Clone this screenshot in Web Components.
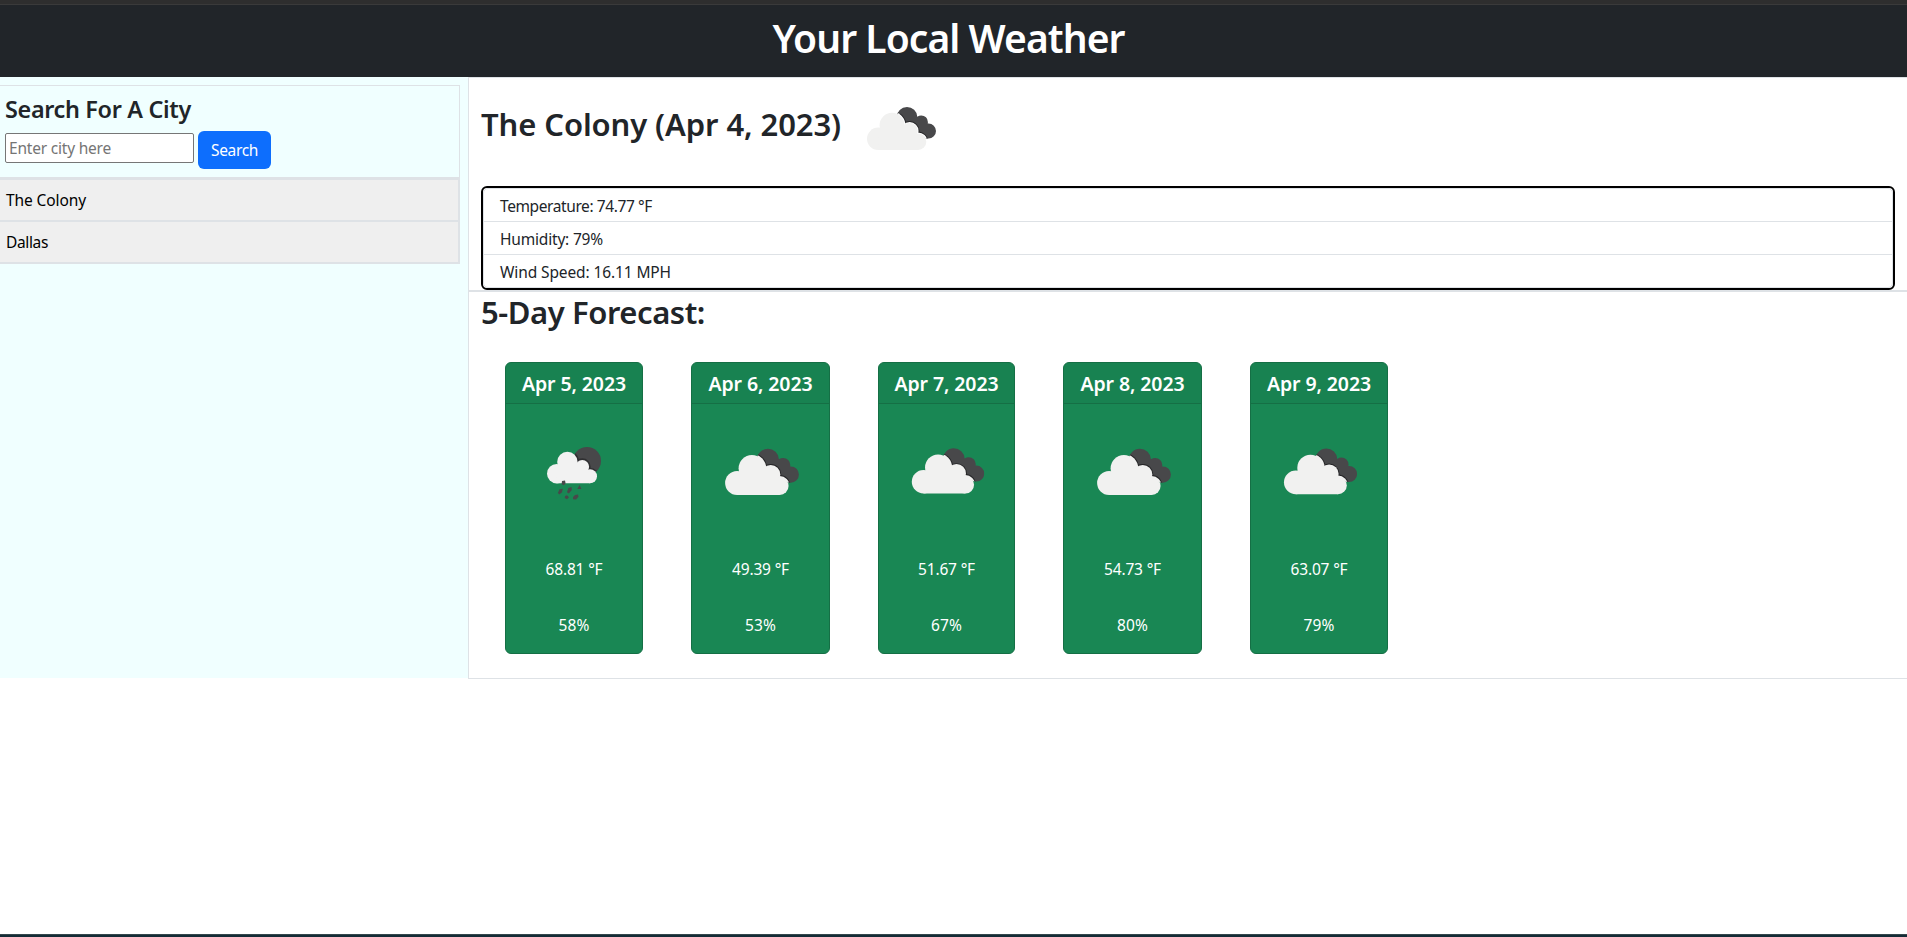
<!DOCTYPE html>
<html lang="en">
<head>
<meta charset="utf-8">
<title>Your Local Weather</title>
<style>
html,body{margin:0;height:100%}
body{font:15.5px/24px "Noto Sans","Open Sans",sans-serif;color:#212529;background:#fff;overflow:hidden}
</style>
</head>
<body>
<weather-app></weather-app>
<script>
const define = (name, html, init) => customElements.define(name, class extends HTMLElement {
  connectedCallback() {
    if (this.shadowRoot) return;
    const t = document.createElement('template');
    t.innerHTML = typeof html === 'function' ? html(this) : html;
    this.attachShadow({mode: 'open'}).append(t.content.cloneNode(true));
    if (init) init(this);
  }
});

// Text tracked to a given width in pixels.
define('fit-text', '<style>:host{display:inline-block;white-space:nowrap}</style><slot></slot>', el => {
  const natural = el.getBoundingClientRect().width;
  const n = el.textContent.length;
  el.style.letterSpacing = ((+el.getAttribute('w') - natural) / n).toFixed(3) + 'px';
});

const blobs = (list, grow = 0) => list.map(([x, y, r]) => `<circle cx="${x}" cy="${y}" r="${r + grow}"/>`).join('');
const cloudIcon = () => {
  const dark = [[67,27.2,10.3],[81.3,32,6.6],[88.4,41,7.6]];
  const light = [[38.2,48.8,11.2],[52,35.2,12.4],[69.6,41,8],[78,51.7,8.3]];
  const body = 'M38 40H52L66 34L78 46V60H38.2Z';
  return `<g transform="translate(-11 10)">
    <clipPath id="c">${blobs(dark)}<path d="M67 28L81 30L90 42L80 46L66 37Z"/></clipPath>
    <g clip-path="url(#c)"><rect x="50" y="10" width="50" height="45" fill="#48484a"/>
    <g fill="#252527">${blobs(light, 1.9)}</g><g class="gap">${blobs(light, 1)}</g></g>
    <g fill="#f1f1f0">${blobs(light)}<path d="${body}"/></g></g>`;
};
const rainIcon = () => {
  const light = [[26.7,43.7,9.7],[37.4,32,10.2],[52.3,36.7,6.8],[60,46.3,7]];
  return `<g transform="scale(.9615) translate(8 10)">
    <clipPath id="c"><circle cx="57" cy="31" r="14"/></clipPath>
    <g clip-path="url(#c)"><rect x="40" y="10" width="40" height="45" fill="#48484a"/>
    <g fill="#303032">${blobs(light, 1.6)}</g></g>
    <g fill="#f2f2f2">${blobs(light)}<path d="M27 36H38L50 33L60 42V53.3H26.7Z"/></g>
    <g fill="#48484a"><path d="M32 51L35 50.5L35.6 53.5L33.8 55.2L31.6 54.2Z"/><path d="M38.4 58L41.5 57L41.8 60L38.8 63.4L37 62.2Z"/>
    <path d="M49.6 55L51.4 59H47.3Z"/><path d="M29.5 59.3L32.8 58.8L32 62.3L29.4 64.6L27.9 63Z"/>
    <path d="M37 65.2L39 67.2L37 69.2L34.7 68L35.2 66Z"/><path d="M45 65L48 64.6L48.5 66.8L46 69.6L43 69.2V67Z"/></g></g>`;
};
define('weather-icon', el => `<style>:host{display:block}svg{display:block;width:100%;height:100%}.gap{fill:var(--gap,#f1f1f0)}</style>
<svg viewBox="0 0 100 100">${el.getAttribute('kind') === 'rain' ? rainIcon() : cloudIcon()}</svg>`);

define('site-header', `<style>
:host{display:block;box-sizing:border-box;height:77px;background:#212529;color:#fff;border-top:4px solid #2e2e2e;text-align:center}
h1{margin:0;border-top:1px solid #3a3a3a;font-size:39px;line-height:66px;font-weight:600;padding-right:10px}
</style><h1><fit-text w="352">Your Local Weather</fit-text></h1>`);

define('city-search', `<style>
:host{display:block;box-sizing:border-box;height:93px;border:1px solid #dee2e6;border-left:0;padding:9px 5px 0}
h4{margin:0 0 7px;font-size:23.4px;line-height:29px;font-weight:560}
form{display:flex;align-items:flex-start;gap:4px}
.field{box-sizing:border-box;width:189px;height:30px;margin-top:2px;border:1px solid #767676;border-radius:2px;background:#fff;color:#757575;padding:0 3px;line-height:28px}
.btn{width:73px;height:38px;border-radius:6px;background:#0d6efd;color:#fff;text-align:center;line-height:38px}
</style><h4><fit-text w="186">Search For A City</fit-text></h4>
<form><div class="field"><fit-text w="102">Enter city here</fit-text></div><div class="btn"><fit-text w="47">Search</fit-text></div></form>`);

define('city-history', `<style>
:host{display:grid;grid-auto-rows:40px;row-gap:2px;background:#dee2e6;padding:2px 2px 2px 0}
</style><slot></slot>`);
define('city-item', `<style>
:host{display:block;background:#efefef;color:#000;padding-left:6px;line-height:41px}
</style><slot></slot>`);

define('side-bar', `<style>
:host{display:block;box-sizing:border-box;width:468px;height:601px;background:#f0ffff;padding:8px 8px 0 0}
</style><slot></slot>`);

define('current-weather', `<style>
:host{display:block;box-sizing:border-box;height:214px;border:1px solid #dee2e6;border-right:0;padding:2px 12px 0}
.title{display:flex;align-items:flex-start;height:106px}
h2{margin:0;font-size:31px;line-height:88px;font-weight:560}
weather-icon{width:100px;height:100px;margin-left:10px;--gap:#fff}
.box{box-sizing:border-box;height:104px;border:2px solid #000;border-radius:6px}
ul{list-style:none;margin:0;padding:0;border:1px solid #dee2e6;border-radius:5px;height:98px}
li{height:32px;line-height:34px;padding-left:16px;border-bottom:1px solid #dee2e6}
li:last-child{border:0}
</style>
<div class="title"><h2><fit-text w="360">The Colony (Apr 4, 2023)</fit-text></h2><weather-icon kind="clouds"></weather-icon></div>
<div class="box"><ul><li><fit-text w="152">Temperature: 74.77 °F</fit-text></li><li><fit-text w="103">Humidity: 79%</fit-text></li><li><fit-text w="171">Wind Speed: 16.11 MPH</fit-text></li></ul></div>`);

define('five-day-forecast', `<style>
:host{display:block;box-sizing:border-box;height:388px;border:1px solid #dee2e6;border-right:0;padding:0 12px}
h2{margin:0;font-size:31px;line-height:41px;font-weight:560}
.days{display:grid;grid-template-columns:186px 187px 185px 187px 186px;padding:29px 0 0 24px}
</style><h2><fit-text w="224">5-Day Forecast:</fit-text></h2><div class="days"><slot></slot></div>`);

define('day-card', el => `<style>
:host{display:block;box-sizing:border-box;width:${el.getAttribute('width')}px;height:292px;background:#198754;border:1px solid #156f45;border-radius:6px;color:#fff;text-align:center}
h5{margin:0;height:40px;line-height:41px;font-size:19.5px;font-weight:600;background:rgba(0,0,0,.03);border-bottom:1px solid #156f45;border-radius:5px 5px 0 0}
.body{box-sizing:border-box;height:141px;padding:16px 16px 0}
weather-icon{aspect-ratio:1}
weather-icon[kind=clouds]{margin:0 -1.5px 0 -.5px}
p{margin:0;height:56px;line-height:48px}
</style><h5><fit-text w="104">${el.getAttribute('date')}</fit-text></h5>
<div class="body"><weather-icon kind="${el.getAttribute('kind')}"></weather-icon></div>
<p><fit-text w="57">${el.getAttribute('temp')} °F</fit-text></p><p><fit-text w="31">${el.getAttribute('humidity')}%</fit-text></p>`);

define('weather-app', `<style>
:host{display:flex;flex-direction:column;height:937px;box-sizing:border-box;border-bottom:2px solid #142b36}
.row{display:grid;grid-template-columns:468px 1fr;align-items:start}
.edge{margin-top:auto;height:1px;background:#34474c}
</style>
<site-header></site-header>
<div class="row"><side-bar><city-search></city-search><city-history>
<city-item><fit-text w="80">The Colony</fit-text></city-item><city-item><fit-text w="42">Dallas</fit-text></city-item></city-history></side-bar>
<main><current-weather></current-weather><five-day-forecast>
<day-card width="138" date="Apr 5, 2023" kind="rain" temp="68.81" humidity="58"></day-card>
<day-card width="139" date="Apr 6, 2023" kind="clouds" temp="49.39" humidity="53"></day-card>
<day-card width="137" date="Apr 7, 2023" kind="clouds" temp="51.67" humidity="67"></day-card>
<day-card width="139" date="Apr 8, 2023" kind="clouds" temp="54.73" humidity="80"></day-card>
<day-card width="138" date="Apr 9, 2023" kind="clouds" temp="63.07" humidity="79"></day-card>
</five-day-forecast></main></div><div class="edge"></div>`);
</script>
</body>
</html>
